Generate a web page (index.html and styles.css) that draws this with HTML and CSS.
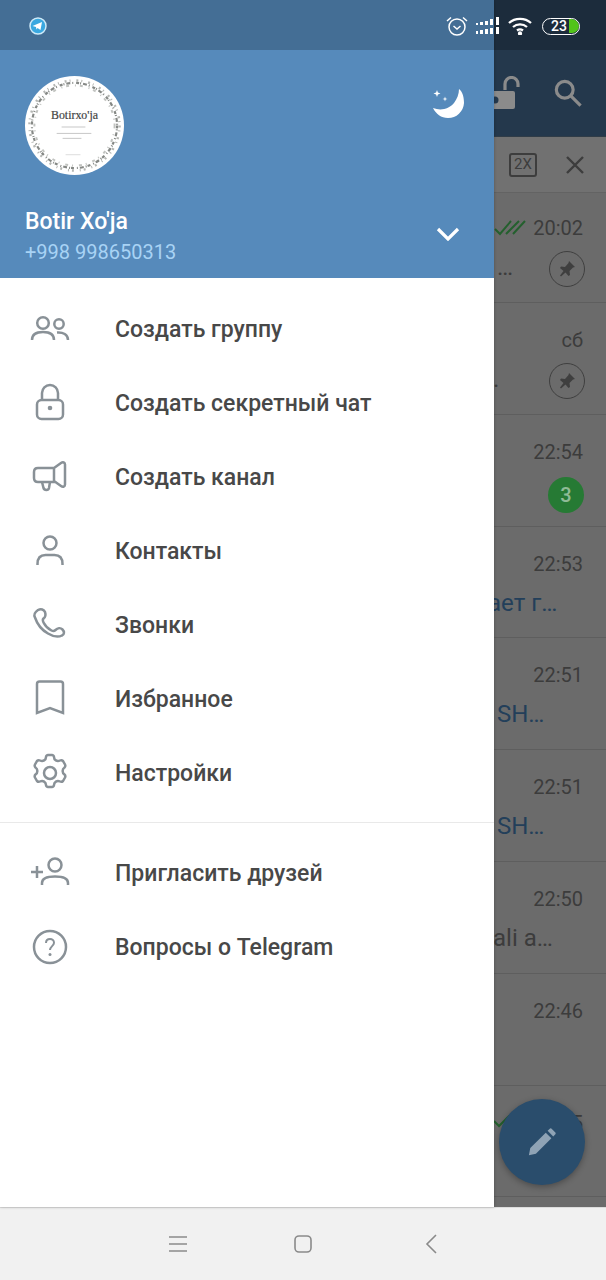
FILE: index.html
```html
<!DOCTYPE html>
<html lang="ru">
<head>
    <meta charset="utf-8">
    <title>Telegram</title>
    <link rel="stylesheet" href="styles.css">
</head>
<body>
<div class="screen">

    <!-- chat list behind the drawer -->
    <div class="backdrop">
        <div class="toolbar">
            <svg class="tb-lock" width="34" height="34" viewBox="0 0 34 34"><path d="M0 15h22a2 2 0 0 1 2 2v14a2 2 0 0 1-2 2H0z" fill="#8b8b8b"/><circle cx="4" cy="24" r="3.500" fill="#24384c"/><path d="M14 14V8a6.500 6.500 0 0 1 13 0v3" fill="none" stroke="#8b8b8b" stroke-width="3.200"/></svg>
            <svg class="tb-search" width="28" height="28" viewBox="0 0 30 30" fill="none" stroke="#8b8b8b" stroke-width="3.400"><circle cx="11.500" cy="11.500" r="9"/><path d="M18 18l10.500 10.500"/></svg>
        </div>
        <div class="player">
            <span class="speed">2X</span>
            <svg width="18" height="18" viewBox="0 0 18 18" stroke="#3d3d3d" stroke-width="2.400"><path d="M1 1l16 16M17 1L1 17"/></svg>
        </div>
        <div class="rows">
            <div class="row">
                <div class="line">
                    <svg class="checks" width="32" height="16" viewBox="0 0 32 16" fill="none" stroke="#24602e" stroke-width="2"><path d="M1 9l5 5L17 1M12 14L25 1M19 14L31 1"/></svg>
                    <span class="time">20:02</span>
                </div>
                <div class="line lower"><span class="preview">…</span><span class="pin"><svg width="18" height="18" viewBox="0 0 18 18" fill="#3f3f3f"><path d="M11 1l6 6-2 .5-3.500 3.500.5 4-1.500 1-3-3.500L3 16.500l-1-1 3.500-4.500L2 8l1-1.500 4 .5L10.500 3z"/></svg></span></div>
            </div>
            <div class="row">
                <div class="line"><span class="time">сб</span></div>
                <div class="line lower"><span class="preview shift">.</span><span class="pin"><svg width="18" height="18" viewBox="0 0 18 18" fill="#3f3f3f"><path d="M11 1l6 6-2 .5-3.500 3.500.5 4-1.500 1-3-3.500L3 16.500l-1-1 3.500-4.500L2 8l1-1.500 4 .5L10.500 3z"/></svg></span></div>
            </div>
            <div class="row">
                <div class="line"><span class="time">22:54</span></div>
                <div class="line lower"><span class="preview clip">.</span><span class="badge">3</span></div>
            </div>
            <div class="row">
                <div class="line"><span class="time">22:53</span></div>
                <div class="line lower"><span class="preview blue clip">ает г…</span></div>
            </div>
            <div class="row">
                <div class="line"><span class="time">22:51</span></div>
                <div class="line lower"><span class="preview blue">SH…</span></div>
            </div>
            <div class="row">
                <div class="line"><span class="time">22:51</span></div>
                <div class="line lower"><span class="preview blue">SH…</span></div>
            </div>
            <div class="row">
                <div class="line"><span class="time">22:50</span></div>
                <div class="line lower"><span class="preview shift">ali a…</span></div>
            </div>
            <div class="row">
                <div class="line"><span class="time">22:46</span></div>
            </div>
            <div class="row">
                <div class="line">
                    <svg class="checks" width="32" height="16" viewBox="0 0 32 16" fill="none" stroke="#24602e" stroke-width="2"><path d="M0 6l5 5L16 0"/></svg>
                    <span class="time">22:45</span>
                </div>
            </div>
        </div>
        <div class="fab">
            <svg width="30" height="30" viewBox="0 0 32 32" fill="#8fa3b5"><path d="M2 30l1.500-7.500L20 6l6 6L9.500 28.500zM22 4l2-2c.8-.8 1.800-.8 2.500 0l3.500 3.500c.8.700.8 1.700 0 2.500l-2 2z"/></svg>
        </div>
    </div>

    <!-- drawer -->
    <aside class="drawer">
        <header class="drawer-head">
            <div class="head-top">
                <svg class="avatar" width="99" height="99" viewBox="0 0 100 100">
                    <circle cx="50" cy="50" r="50" fill="#fff"/>
                    <circle cx="50" cy="50" r="43" fill="none" stroke="#858885" stroke-width="2.200" stroke-dasharray="3 1 1 2 4 2 1 3"/>
                    <circle cx="50" cy="50" r="45.500" fill="none" stroke="#b5b7b4" stroke-width="2.500" stroke-dasharray="2 3 1 6"/>
                    <circle cx="50" cy="50" r="40.500" fill="none" stroke="#c2c4c1" stroke-width="2" stroke-dasharray="3 6 1 4"/>
                    <text x="50" y="43" text-anchor="middle" class="avatar-name">Botirxo'ja</text>
                    <path d="M37 51.500h24M32 58h35M38 63h19" stroke="#c6c6c6" stroke-width="1"/>
                    <path d="M41 79.500h15" stroke="#dddddd" stroke-width="1"/>
                </svg>
                <svg class="moon" width="32" height="32" viewBox="0 0 32 32">
                    <path d="M26 1C30 4 31 10 31 15A16 16 0 0 1 15 30C8 30 3 26 0 20C8 23 16 21 21 15C24 11 26 6 26 1z" fill="#fff"/>
                    <path d="M4 2l.9 2.600 2.600.9-2.600.9L4 9l-.9-2.600-2.600-.9 2.600-.9zM12 8.500l.6 1.900 1.900.6-1.900.6-.6 1.900-.6-1.900-1.900-.6 1.900-.6z" fill="#fff"/>
                </svg>
            </div>
            <div class="head-bottom">
                <div>
                    <div class="user-name">Botir Xo'ja</div>
                    <div class="user-phone">+998 998650313</div>
                </div>
                <svg class="chevron" width="24" height="14" viewBox="0 0 24 14" fill="none" stroke="#fff" stroke-width="3.200"><path d="M2 2l10 10L22 2"/></svg>
            </div>
        </header>

        <nav class="menu">
            <div class="item">
                <svg class="ico" viewBox="0 0 40 40"><circle cx="13" cy="14" r="5.800"/><path d="M2 31c0-5 4-8 11-8s11 3 11 8"/><circle cx="29" cy="15" r="4.700"/><path d="M27 23.500c6-.5 11 2 11 7.500"/></svg>
                <span>Создать группу</span>
            </div>
            <div class="item">
                <svg class="ico" viewBox="0 0 40 40"><rect x="7" y="17" width="26" height="19" rx="4.500"/><path d="M12 17v-7a8 8 0 0 1 16 0v7"/><circle cx="20" cy="25" r="2.300" fill="#899197" stroke="none"/></svg>
                <span>Создать секретный чат</span>
            </div>
            <div class="item">
                <svg class="ico" viewBox="0 0 40 40"><path d="M24 11H8c-2.500 0-4 1.500-4 4v6c0 2.500 1.500 4 4 4h16zM24 11l7-5c2-1.400 4-.5 4 1.500v20c0 2-2 3-4 1.500l-7-5"/><path d="M12 25l1.500 6c.8 2.500 5 2.500 5.500 0l1-6"/></svg>
                <span>Создать канал</span>
            </div>
            <div class="item">
                <svg class="ico" viewBox="0 0 40 40"><circle cx="20" cy="12" r="6.500"/><path d="M7.500 34v-1c0-6 3-9 8-9h9c5 0 8 3 8 9v1"/></svg>
                <span>Контакты</span>
            </div>
            <div class="item">
                <svg class="ico" viewBox="0 0 40 40"><path d="M8 5c3-1.500 6-.5 7 2 1 3 .5 5-1.500 6.500-1 1-1 2 0 4 2 4 4 6 8 8 2 1 3 .5 4-.5 2-2 5-2.500 7-.5 2 2 2 5-.5 6-4 2-9 1-14-2-7-4-11-10-13-16C3.500 10 5 7 8 5z"/></svg>
                <span>Звонки</span>
            </div>
            <div class="item">
                <svg class="ico" viewBox="0 0 40 40"><path d="M7 5c0-1.500 1-2.500 2.500-2.500h21C32 2.500 33 3.500 33 5v29l-13-5-13 5z"/></svg>
                <span>Избранное</span>
            </div>
            <div class="item">
                <svg class="ico" viewBox="0 0 40 40"><circle cx="20" cy="20" r="6"/><path d="M16 4c0-1 1-2 2-2h4c1 0 2 1 2 2 0 3 3 5 6 3.500 1-.5 2-.5 3 .5l2 3.500c.5 1 .5 2-.5 3-2.500 1.500-2.500 5.500 0 7 1 1 1 2 .5 3l-2 3.500c-1 1-2 1-3 .5-3-1.500-6 .5-6 3.500 0 1-1 2-2 2h-4c-1 0-2-1-2-2 0-3-3-5-6-3.500-1 .5-2 .5-3-.5l-2-3.500c-.5-1-.5-2 .5-3 2.500-1.500 2.500-5.500 0-7-1-1-1-2-.5-3l2-3.500c1-1 2-1 3-.5 3 1.500 6-.5 6-3.500z"/></svg>
                <span>Настройки</span>
            </div>
            <div class="divider"></div>
            <div class="item">
                <svg class="ico" viewBox="0 0 40 40"><circle cx="25" cy="12" r="6.500"/><path d="M12 32v-2c0-4 4-6.500 13-6.500s13 2.500 13 6.500v2"/><path d="M1 19h12M7 13v12"/></svg>
                <span>Пригласить друзей</span>
            </div>
            <div class="item">
                <svg class="ico" viewBox="0 0 40 40"><circle cx="20" cy="20" r="16"/><path d="M16 16c0-2.500 1.800-4 4-4s4 1.600 4 3.800c0 3.200-4 3.500-4 7.200" stroke-width="2"/><circle cx="20" cy="27.500" r="1.500" fill="#899197" stroke="none"/></svg>
                <span>Вопросы о Telegram</span>
            </div>
        </nav>
    </aside>

    <!-- android status bar, dims whatever is under it -->
    <div class="statusbar">
        <svg class="tg" width="18" height="18" viewBox="0 0 18 18"><circle cx="9" cy="9" r="8" fill="#3aa8e0" stroke="#cfeaf8" stroke-width="1.500"/><path d="M3.500 9L13 5l-1.500 8-3-2-1 1.500-.5-2.500z" fill="#fff"/></svg>
        <div class="status-right">
            <svg width="22" height="20" viewBox="0 0 22 20" fill="none" stroke="#fff" stroke-width="1.500"><circle cx="11" cy="11" r="8"/><path d="M7.500 10l3.500 3 3.500-3M1 5l4-3.500M21 5l-4-3.500"/></svg>
            <svg width="24" height="18" viewBox="0 0 24 18" fill="#fff"><path d="M0 6h2v2H0zM4 5h3v3H4zM9 4h3v4H9zM14 2h3v6h-3zM20 0h3v8h-3zM0 14h2v3H0zM4 13h3v4H4zM9 12h3v5H9zM14 11h3v6h-3zM20 10h3v7h-3z"/></svg>
            <svg width="24" height="18" viewBox="0 0 24 18" fill="none" stroke="#fff" stroke-width="2.300"><path d="M1 6c6-5.500 16-5.500 22 0M5 10c4-3.500 10-3.500 14 0M9 13.500c2-1.500 4-1.500 6 0"/><circle cx="12" cy="16.500" r="1" fill="#fff"/></svg>
            <div class="battery"><span class="batt-num">23</span><span class="batt-fill"></span></div>
        </div>
    </div>

    <div class="navbar">
        <svg width="18" height="16" viewBox="0 0 18 16" stroke="#8a8a8a" stroke-width="1.600"><path d="M0 1h18M0 8h18M0 15h18"/></svg>
        <svg width="18" height="18" viewBox="0 0 18 18" fill="none" stroke="#8a8a8a" stroke-width="1.600"><rect x="1" y="1" width="16" height="16" rx="4"/></svg>
        <svg class="nav-back" width="12" height="20" viewBox="0 0 12 20" fill="none" stroke="#8a8a8a" stroke-width="1.600"><path d="M11 1L2 10l9 9"/></svg>
    </div>
</div>
</body>
</html>
```

FILE: styles.css
```css
* {
    box-sizing: border-box;
}
body {
    margin: 0;
    font-family: Roboto, "Noto Sans", sans-serif;
    background: #f1f1f1;
}
.screen {
    position: relative;
    width: 606px;
    height: 1280px;
    overflow: hidden;
    display: flex;
    flex-direction: column;
}

/* backdrop */
.backdrop {
    position: relative;
    height: 1207px;
    overflow: hidden;
    background: #6b6b6b;
}
.toolbar {
    height: 137px;
    padding: 50px 24px 0 491px;
    background: #24384c;
    display: flex;
    align-items: center;
    justify-content: space-between;
    border-bottom: 1px solid #303c47;
}
.player {
    height: 56px;
    padding: 0 22px 0 509px;
    background: #717171;
    border-bottom: 1px solid #636363;
    display: flex;
    align-items: center;
    justify-content: space-between;
}
.speed {
    width: 28px;
    height: 24px;
    border: 2.500px solid #3d3d3d;
    border-radius: 3px;
    color: #3d3d3d;
    font-size: 15px;
    line-height: 19px;
    text-align: center;
}
.row {
    height: 111.800px;
    padding: 23px 24px 0 497px;
    border-bottom: 1px solid #5e5e5e;
}
.rows .row:first-child {
    height: 110px;
    padding-top: 21px;
}
.line {
    display: flex;
    justify-content: flex-end;
    align-items: center;
    height: 28px;
    position: relative;
}
.line.lower {
    justify-content: space-between;
    height: 40px;
    margin-top: 5px;
}
.time {
    font-size: 20px;
    color: #3c3c3c;
    margin-right: -1px;
}
.checks {
    position: absolute;
    left: -3px;
    top: 6px;
}
.preview {
    font-size: 24px;
    color: #3c3c3c;
    white-space: nowrap;
}
.preview.blue {
    color: #233f5a;
}
.preview.shift {
    margin-left: -4px;
}
.preview.clip {
    margin-left: -9px;
}
.pin {
    width: 36px;
    height: 36px;
    margin: 4px -3px 0 0;
    border: 1.500px solid #3f3f3f;
    border-radius: 50%;
    display: flex;
    align-items: center;
    justify-content: center;
}
.badge {
    width: 36px;
    height: 36px;
    margin: 8px -2px 0 0;
    border-radius: 50%;
    background: #267a34;
    color: #8fbb96;
    font-size: 20px;
    font-weight: 500;
    line-height: 36px;
    text-align: center;
}
.fab {
    position: absolute;
    left: 499px;
    top: 1099px;
    width: 86px;
    height: 86px;
    border-radius: 50%;
    background: #2a4d6c;
    box-shadow: 0 2px 6px rgba(0, 0, 0, 0.3);
    display: flex;
    align-items: center;
    justify-content: center;
}

/* drawer */
.drawer {
    position: absolute;
    left: 0;
    top: 0;
    width: 494px;
    height: 1207px;
    background: #fff;
    box-shadow: 0 0 3px rgba(0, 0, 0, 0.25);
}
.drawer-head {
    height: 278px;
    padding: 76px 29px 0 25px;
    background: #568abb;
    display: flex;
    flex-direction: column;
    justify-content: space-between;
}
.head-top {
    display: flex;
    justify-content: space-between;
    align-items: flex-start;
}
.moon {
    margin-top: 12px;
}
.avatar-name {
    font-family: "Liberation Serif", serif;
    font-size: 12px;
    stroke: #444;
    stroke-width: 0.200px;
    fill: #444;
}
.head-bottom {
    display: flex;
    justify-content: space-between;
    align-items: center;
    padding-bottom: 11px;
}
.chevron {
    margin: -7px 5px 0 0;
}
.user-name {
    color: #fff;
    font-size: 23px;
    font-weight: 500;
    line-height: 29px;
}
.user-phone {
    color: #a8d3f5;
    font-size: 20px;
    line-height: 30px;
    margin-top: 1px;
}
.menu {
    padding-top: 14px;
}
.item {
    height: 74px;
    padding-left: 30px;
    display: flex;
    align-items: center;
    gap: 45px;
    color: #484848;
    font-size: 23px;
    font-weight: 500;
}
.ico {
    width: 40px;
    height: 40px;
    fill: none;
    stroke: #899197;
    stroke-width: 2.500;
    flex-shrink: 0;
}
.divider {
    height: 1px;
    margin: 12px 0 13px;
    background: #e9e9e9;
}

/* status bar + nav bar */
.statusbar {
    position: absolute;
    left: 0;
    top: 0;
    width: 606px;
    height: 50px;
    padding: 2px 26px 0 29px;
    background: rgba(0, 0, 0, 0.2);
    display: flex;
    align-items: center;
    justify-content: space-between;
}
.status-right {
    display: flex;
    align-items: center;
    gap: 8px;
}
.battery {
    position: relative;
    width: 38px;
    height: 17px;
    margin-left: 2px;
    border: 1.500px solid #fff;
    border-radius: 9px;
    overflow: hidden;
}
.batt-num {
    position: absolute;
    left: 8px;
    top: -1px;
    color: #fff;
    font-size: 14px;
    font-weight: 500;
    line-height: 17px;
}
.batt-fill {
    position: absolute;
    right: 0;
    top: 0;
    width: 10px;
    height: 14px;
    border-radius: 0 7px 7px 0;
    background: #52c41a;
}
.navbar {
    height: 73px;
    padding-left: 169px;
    background: #f1f1f1;
    border-top: 1px solid #dcdcdc;
    display: flex;
    align-items: center;
    gap: 107px;
}
.nav-back {
    margin-left: 6px;
}
```
